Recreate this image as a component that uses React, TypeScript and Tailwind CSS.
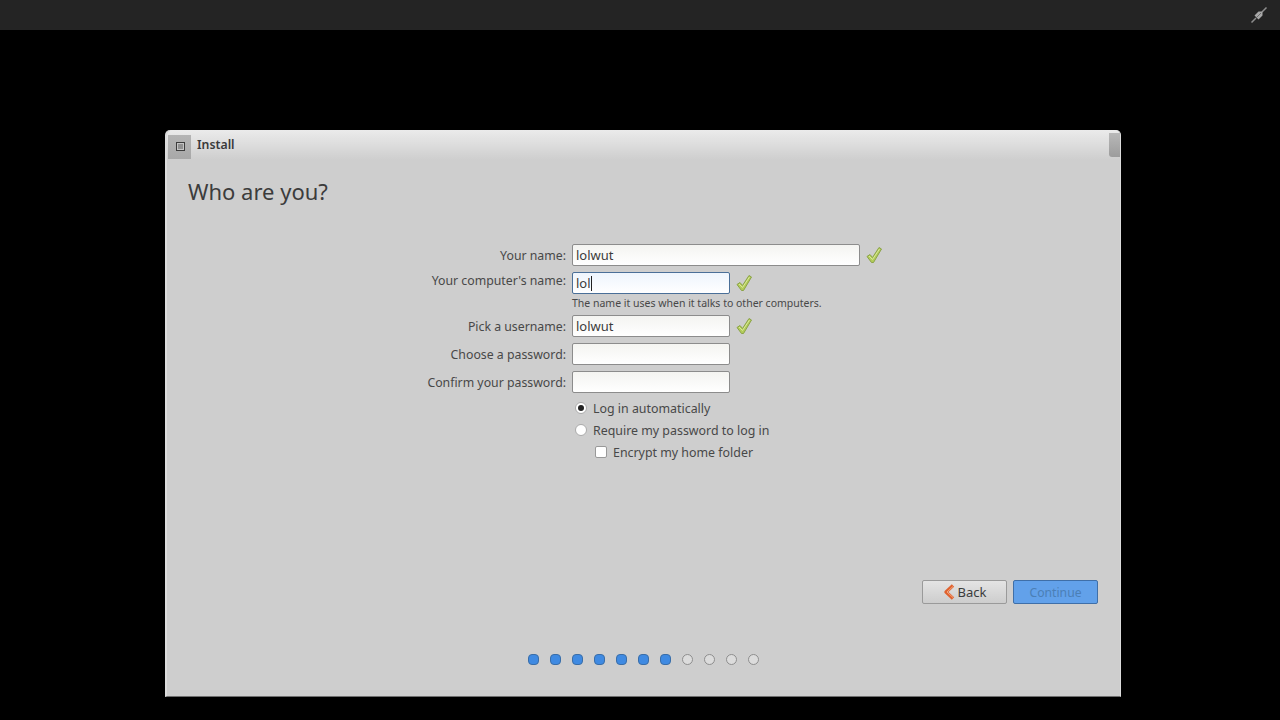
import React from "react";

const font = { fontFamily: '"Noto Sans", sans-serif' };

function Check() {
  return (
    <svg width="18" height="18" viewBox="0 0 18 18" className="shrink-0">
      <path d="M2 10.5 L5 8.5 L7.5 11.5 L14 1.5 L16.5 3 L8.5 16.5 L6.5 16.5 Z" fill="#b3cc5a" stroke="#8ba348" strokeWidth="1" strokeLinejoin="round" />
      <path d="M4 10 L7.5 13.5 L14.5 3" fill="none" stroke="#d9e89a" strokeWidth="1" />
    </svg>
  );
}

function Input({ value, width, focused, ok }: { value?: string; width: string; focused?: boolean; ok?: boolean }) {
  return (
    <div className="flex items-center gap-[5px]">
      <div
        className={`${width} h-[22px] rounded-[2px] border flex items-center pl-[3px] text-[13px] text-[#3c3c3c] bg-gradient-to-b ${
          focused ? "border-[#4a6f98] from-[#eef5fd] to-white" : "border-[#8c8c8c] from-[#f4f4f1] to-white"
        }`}
      >
        {value && <span className="pt-px">{value}</span>}
        {focused && <span className="w-px h-[15px] bg-[#222]" />}
      </div>
      {ok && <Check />}
    </div>
  );
}

function Row({ label, children }: { label: string; children: React.ReactNode }) {
  return (
    <div className="flex items-center gap-[6px] h-[22px]">
      <div className="w-[150px] pt-[2px] flex justify-end text-[12.3px] text-[#484848] whitespace-nowrap">{label}</div>
      {children}
    </div>
  );
}

function Dot({ on }: { on: boolean }) {
  return on ? (
    <div className="w-[11px] h-[11px] rounded-[4px] border border-[#3a6ea8] bg-[#3f8ae2]" />
  ) : (
    <div className="w-[11px] h-[11px] rounded-full border border-[#8e8e8e] bg-[#dcdcdc]" />
  );
}

export default function App() {
  return (
    <div className="w-[1280px] h-[720px] bg-black flex flex-col overflow-hidden" style={font}>
      <div className="h-[30px] shrink-0 bg-[#242424] flex items-center justify-end pr-[11px]">
        <svg width="20" height="20" viewBox="0 0 20 20">
          <path d="M2.5 17.5 L7 13 M13 7 L17.5 2.5" stroke="#8e8e8e" strokeWidth="1.5" />
          <path d="M5.5 10.5 L9.5 6.5 L13.5 6.5 L13.5 10.5 L9.5 14.5 Z" fill="#a8a8a8" />
          <path d="M8 12 L12 8" stroke="#6a6a6a" strokeWidth="1" />
        </svg>
      </div>
      <div className="flex-1 flex flex-col pt-[100px] pl-[165px]">
        <div className="w-[956px] h-[567px] rounded-t-[5px] bg-[#cecece] flex flex-col border-l-2 border-r border-b border-l-[#dcdcdc] border-r-[#dcdcdc] border-b-[#6e6e6e]">
          <div className="h-[30px] shrink-0 flex items-center rounded-t-[5px] bg-gradient-to-b from-[#ebebeb] to-[#cecece]">
            <div className="w-[23px] h-[24px] ml-[1px] mt-[3px] pl-[1px] bg-gradient-to-b from-[#b4b4b4] to-[#a8a8a8] flex items-center justify-center">
              <div className="w-[9px] h-[9px] border border-[#3c3c3c] bg-[#c4c4c4] flex items-center justify-center">
                <div className="w-[5px] h-[5px] bg-[#909090]" />
              </div>
            </div>
            <div className="ml-[6px] pt-[1px] text-[12.3px] font-semibold text-[#3a3a3a]">Install</div>
            <div className="ml-auto mt-[3px] mb-[3px] w-[11px] h-[24px] rounded-bl-[3px] bg-gradient-to-b from-[#b8b8b8] to-[#9c9c9c]" />
          </div>
          <div className="flex-1 flex flex-col">
            <div className="pl-[21px] pt-[16px] h-[84px] shrink-0 text-[22px] leading-[30px] text-[#3c3c3c]">Who are you?</div>
            <div className="flex flex-col items-start pl-[249px]">
              <Row label="Your name:">
                <Input value="lolwut" width="w-[288px]" ok />
              </Row>
              <div className="flex items-center gap-[6px] h-[22px] mt-[6px]">
                <div className="w-[150px] pt-[2px] flex justify-end text-[12.3px] text-[#484848] whitespace-nowrap -translate-y-[3px]">Your computer's name:</div>
                <Input value="lol" width="w-[158px]" focused ok />
              </div>
              <div className="pl-[156px] h-[21px] pb-[2px] flex items-center text-[10.5px] text-[#484848]">The name it uses when it talks to other computers.</div>
              <Row label="Pick a username:">
                <Input value="lolwut" width="w-[158px]" ok />
              </Row>
              <div className="mt-[6px]">
                <Row label="Choose a password:">
                  <Input width="w-[158px]" />
                </Row>
              </div>
              <div className="mt-[6px]">
                <Row label="Confirm your password:">
                  <Input width="w-[158px]" />
                </Row>
              </div>
              <div className="pl-[159px] mt-[4px] flex flex-col text-[12.4px] text-[#484848]">
                <div className="h-[22px] flex items-center gap-[6px]">
                  <div className="w-[12px] h-[12px] rounded-full bg-white border border-[#aaa] flex items-center justify-center">
                    <div className="w-[6px] h-[6px] rounded-full bg-[#222]" />
                  </div>
                  <span className="pt-[2px]">Log in automatically</span>
                </div>
                <div className="h-[22px] flex items-center gap-[6px]">
                  <div className="w-[12px] h-[12px] rounded-full bg-white border border-[#aaa]" />
                  <span className="pt-[2px]">Require my password to log in</span>
                </div>
                <div className="h-[22px] flex items-center gap-[6px] pl-[20px]">
                  <div className="w-[12px] h-[12px] rounded-[2px] bg-white border border-[#999]" />
                  <span className="pt-[2px]">Encrypt my home folder</span>
                </div>
              </div>
            </div>
            <div className="mt-[117px] pr-[22px] flex justify-end gap-[6px]">
              <div className="w-[85px] h-[24px] rounded-[2px] border border-[#9a9a9a] bg-gradient-to-b from-[#e4e4e4] to-[#cdcdcd] flex items-center justify-center gap-[2px] text-[13px] text-[#3c3c3c]">
                <svg width="13" height="16" viewBox="0 0 13 16">
                  <path d="M10 1.5 L3 8 L10 14.5" fill="none" stroke="#e0622f" strokeWidth="3.4" strokeLinejoin="round" />
                  <path d="M10 2.5 L4 8 L10 13.5" fill="none" stroke="#f2a77f" strokeWidth="1" />
                </svg>
                <span className="pt-px">Back</span>
              </div>
              <div className="w-[85px] h-[24px] rounded-[2px] border border-[#3f6fa8] bg-[#62a1ea] flex items-center justify-center text-[12.2px] text-[#4b7fb6]">
                <span className="pt-[2px]">Continue</span>
              </div>
            </div>
            <div className="mt-[50px] pl-[361px] flex gap-[11px]">
              {[1, 1, 1, 1, 1, 1, 1, 0, 0, 0, 0].map((v, i) => (
                <Dot key={i} on={v === 1} />
              ))}
            </div>
          </div>
        </div>
      </div>
    </div>
  );
}
